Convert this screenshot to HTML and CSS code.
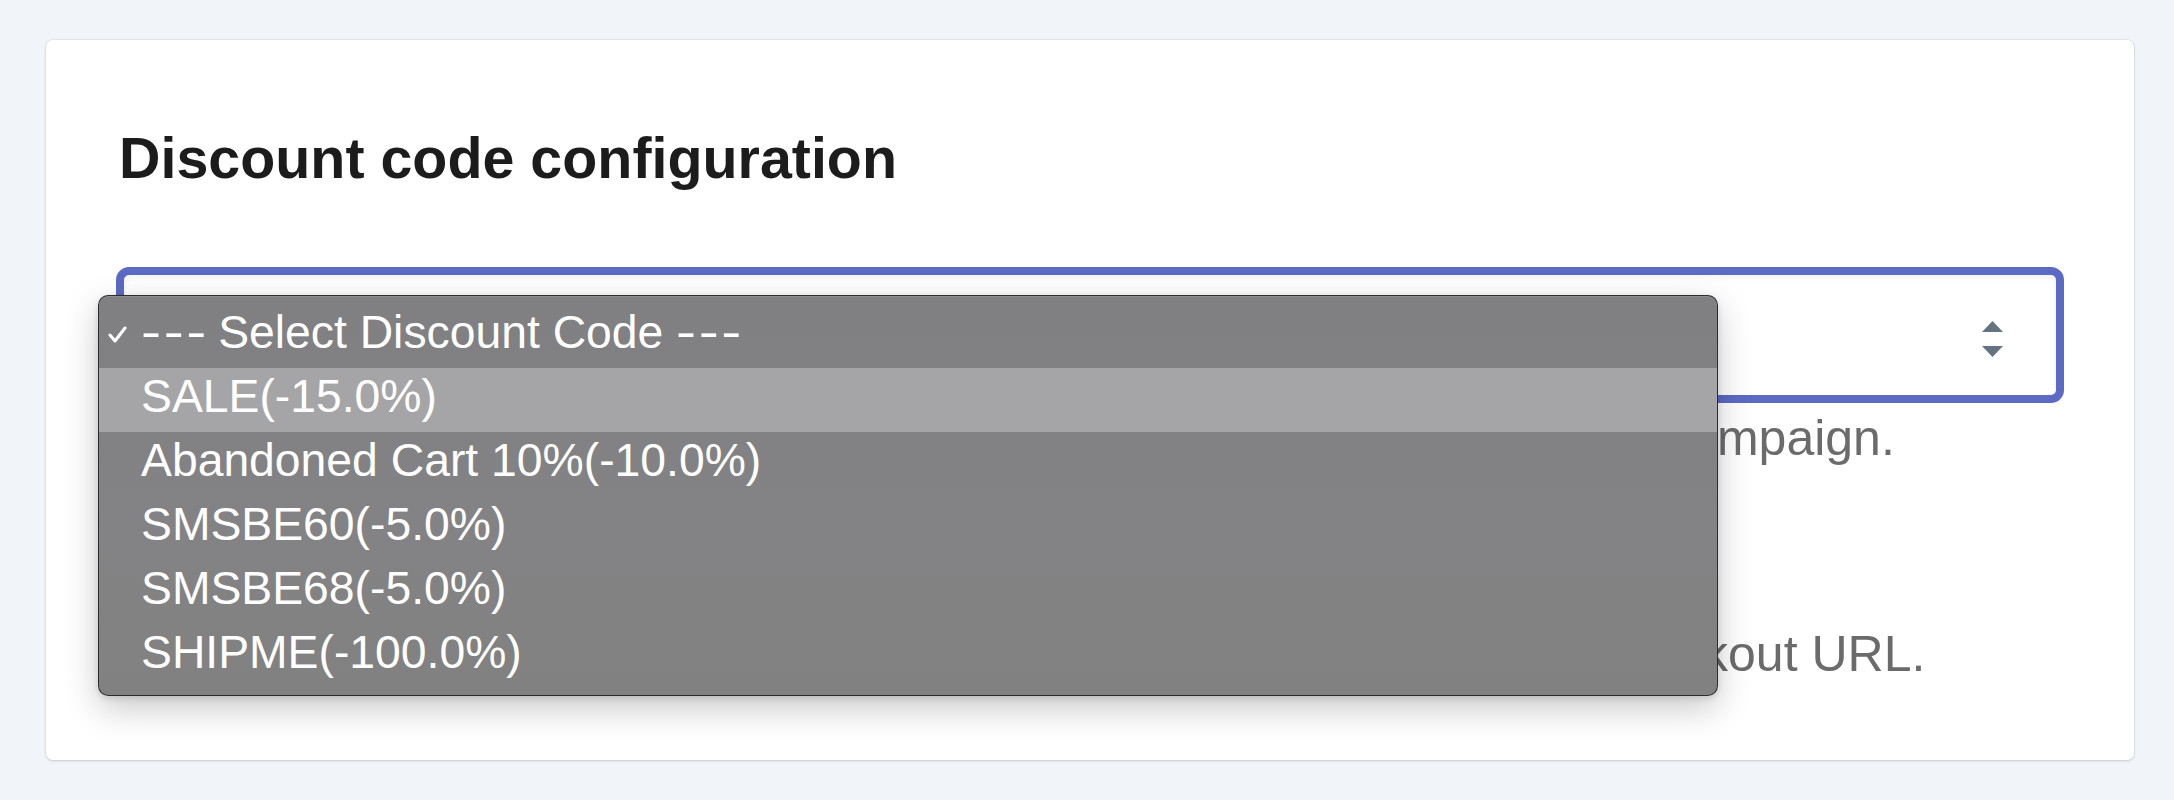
FILE: index.html
```html
<!DOCTYPE html>
<html lang="en">
<head>
<meta charset="utf-8">
<title>Discount code configuration</title>
<link rel="stylesheet" href="styles.css">
</head>
<body>
<div class="card">
  <h2 class="title">Discount code configuration</h2>
  <div class="field">
    <div class="select">
      <span class="select-value"></span>
      <svg class="arrows" width="21" height="36" viewBox="0 0 21 36" aria-hidden="true">
        <polygon points="10.5,0 21,11 0,11" fill="#637381"/>
        <polygon points="0,25 21,25 10.5,36" fill="#637381"/>
      </svg>
    </div>
    <ul class="menu">
      <li class="menu-item is-checked">
        <svg class="check" width="19" height="17" viewBox="0 0 19 17" aria-hidden="true">
          <polyline points="2,9 7,15 17,2" fill="none" stroke="#ffffff" stroke-width="3" stroke-linecap="round" stroke-linejoin="round"/>
        </svg>
        <span class="dashes">---</span> Select Discount Code <span class="dashes">---</span>
      </li>
      <li class="menu-item is-hover">SALE(-15.0%)</li>
      <li class="menu-item">Abandoned Cart 10%(-10.0%)</li>
      <li class="menu-item">SMSBE60(-5.0%)</li>
      <li class="menu-item">SMSBE68(-5.0%)</li>
      <li class="menu-item">SHIPME(-100.0%)</li>
    </ul>
    <p class="help">Select discount code that will be applied to shoppers who receive this campaign.</p>
  </div>
  <div class="field field-second">
    <label class="check-row"><span class="box"></span>Automatically apply discount code</label>
    <p class="help">When enabled, your discount code is automatically applied to your checkout URL.</p>
  </div>
</div>
</body>
</html>
```

FILE: styles.css
```css
* {
  box-sizing: border-box;
}

html, body {
  margin: 0;
  padding: 0;
}

body {
  background: #f1f4f8;
  font-family: "Liberation Sans", Arial, Helvetica, sans-serif;
  width: 2174px;
  height: 800px;
  overflow: hidden;
  padding-top: 40px;
  padding-left: 46px;
}

.card {
  width: 2088px;
  height: 720px;
  background: #ffffff;
  border-radius: 7px;
  box-shadow: 0 0 0 1px rgba(63, 63, 68, 0.05), 0 1px 3px rgba(63, 63, 68, 0.18);
  padding: 84px 70px 0 70px;
}

.title {
  margin: 0;
  padding-left: 3px;
  font-size: 57.4px;
  line-height: 68px;
  font-weight: 700;
  color: #1c1c1c;
}

.field {
  position: relative;
  margin-top: 75px;
}

.field-second {
  margin-top: 44px;
}

.select {
  height: 136px;
  border: 8px solid #5c6ac4;
  border-radius: 13px;
  background: #ffffff;
  box-shadow: inset 0 3px 6px rgba(0, 0, 0, 0.05);
  display: flex;
  align-items: center;
  justify-content: flex-end;
  padding-right: 53px;
}

.select-value {
  flex: 1;
}

.arrows {
  display: block;
  margin-top: 8px;
}

.help {
  margin: 5px 0 0 0;
  font-size: 50px;
  line-height: 60px;
  color: #6b6b6b;
  white-space: nowrap;
}

.field-second .help {
  margin-top: 52px;
}

.check-row {
  display: flex;
  align-items: center;
  gap: 20px;
  height: 60px;
  font-size: 50px;
  color: #212b36;
}

.box {
  width: 40px;
  height: 40px;
  border: 2px solid #c4cdd5;
  border-radius: 6px;
}

.menu {
  position: absolute;
  left: -18px;
  top: 28px;
  width: 1620px;
  margin: 0;
  padding: 8px 0 7px 0;
  list-style: none;
  background: linear-gradient(180deg, #808083 0%, #838385 60%, #818181 100%);
  border: 1px solid rgba(30, 30, 30, 0.85);
  border-radius: 10px;
  box-shadow: inset 0 1px 0 rgba(255, 255, 255, 0.12), 0 12px 34px rgba(0, 0, 0, 0.22), 0 2px 6px rgba(0, 0, 0, 0.12);
  z-index: 5;
}

.menu-item {
  position: relative;
  height: 64px;
  line-height: 56px;
  padding: 0 0 8px 42px;
  font-size: 46.3px;
  color: #ffffff;
  white-space: nowrap;
}

.menu-item.is-hover {
  background: #a5a5a7;
}

.dashes {
  display: inline-block;
  letter-spacing: 2px;
  margin-right: 12px;
  transform: scaleX(1.3);
  transform-origin: left center;
}

.check {
  position: absolute;
  left: 9px;
  top: 22px;
}
```
